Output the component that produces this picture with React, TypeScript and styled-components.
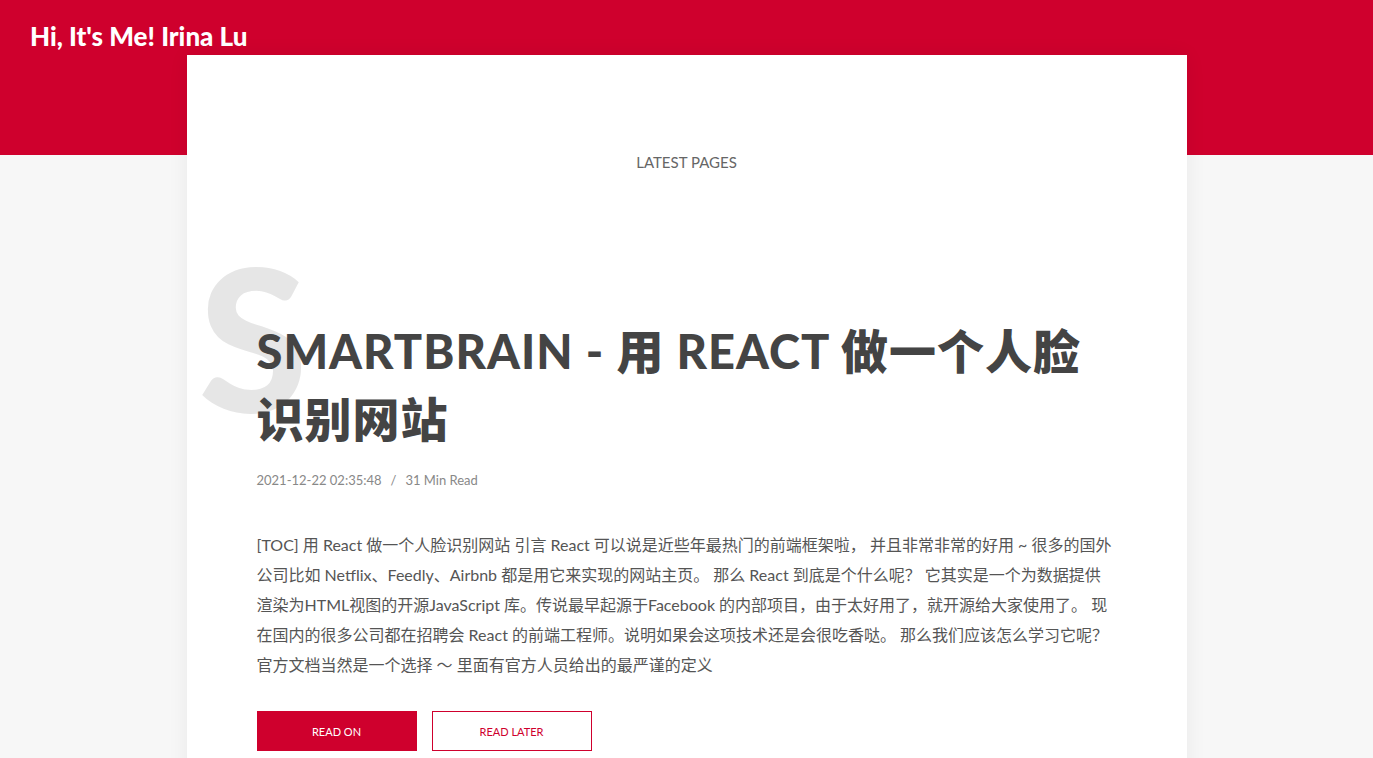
import React from 'react';
import styled, { createGlobalStyle } from 'styled-components';

const RED = '#cf002d';
const CJK = '"Noto Sans CJK SC", sans-serif';

const GlobalStyle = createGlobalStyle`
  html, body {
    margin: 0;
    padding: 0;
    background: #f7f7f7;
    font-family: Lato, ${CJK};
  }
`;

/*
 ** HEADER
 */

const Header = styled.header`
  height: 155px;
  background: ${RED};
  box-sizing: border-box;
  padding: 19px 0 0 30px;
`;

const Brand = styled.h1`
  margin: 0;
  color: #fff;
  font-family: Lato, ${CJK};
  font-weight: 900;
  font-size: 26px;
  line-height: 34px;
`;

/*
 ** CARD
 */

const Card = styled.main`
  position: relative;
  width: 1000px;
  margin: -100px auto 0;
  background: #fff;
  box-shadow: 0 0 20px rgba(0, 0, 0, 0.06);
  box-sizing: border-box;
  padding: 97px 70px 40px;
  min-height: 703px;
`;

const SectionTitle = styled.h2`
  margin: 0;
  text-align: center;
  font-family: Lato, ${CJK};
  font-weight: 400;
  font-size: 15px;
  line-height: 20px;
  color: #666;
`;

const Article = styled.article`
  position: relative;
  margin-top: 145px;
`;

const Watermark = styled.span`
  position: absolute;
  left: -58px;
  top: -80px;
  font-family: Lato, ${CJK};
  font-weight: 900;
  font-size: 198px;
  line-height: 1;
  color: #e6e6e6;
  z-index: 0;
  user-select: none;
`;

const Title = styled.h3`
  position: relative;
  z-index: 1;
  max-width: 850px;
  margin: 0;
  font-family: Lato, ${CJK};
  font-weight: 900;
  font-size: 47px;
  letter-spacing: 1px;
  line-height: 68px;
  color: #444;
`;

const Meta = styled.div`
  margin-top: 18px;
  font-size: 13px;
  line-height: 18px;
  color: #888;
`;

const Slash = styled.span`
  margin: 0 9px;
`;

const Excerpt = styled.p`
  margin: 41px 0 0;
  font-size: 16px;
  line-height: 30px;
  color: #555;
`;

const Actions = styled.div`
  display: flex;
  gap: 15px;
  margin-top: 31px;
`;

const Button = styled.button<{ $outline?: boolean }>`
  width: 160px;
  height: 40px;
  box-sizing: border-box;
  border: 1px solid ${RED};
  background: ${p => (p.$outline ? '#fff' : RED)};
  color: ${p => (p.$outline ? RED : '#fff')};
  font-family: Lato, ${CJK};
  font-size: 11px;
  text-transform: uppercase;
  cursor: pointer;
`;

const App: React.FC = () => (
  <>
    <GlobalStyle />
    <Header>
      <Brand>Hi, It's Me! Irina Lu</Brand>
    </Header>
    <Card>
      <SectionTitle>LATEST PAGES</SectionTitle>
      <Article>
        <Watermark>S</Watermark>
        <Title>SMARTBRAIN - 用 REACT 做一个人脸识别网站</Title>
        <Meta>
          2021-12-22 02:35:48<Slash>/</Slash>31 Min Read
        </Meta>
        <Excerpt>
          [TOC] 用 React 做一个人脸识别网站 引言 React 可以说是近些年最热门的前端框架啦， 并且非常非常的好用 ~
          很多的国外公司比如 Netflix、Feedly、Airbnb 都是用它来实现的网站主页。 那么 React 到底是个什么呢？
          它其实是一个为数据提供渲染为HTML视图的开源JavaScript 库。传说最早起源于Facebook 的内部项目，由于太好用了，就开源给大家使用了。
          现在国内的很多公司都在招聘会 React 的前端工程师。说明如果会这项技术还是会很吃香哒。 那么我们应该怎么学习它呢？
          官方文档当然是一个选择 ～ 里面有官方人员给出的最严谨的定义
        </Excerpt>
        <Actions>
          <Button>Read On</Button>
          <Button $outline>Read Later</Button>
        </Actions>
      </Article>
    </Card>
  </>
);

export default App;
